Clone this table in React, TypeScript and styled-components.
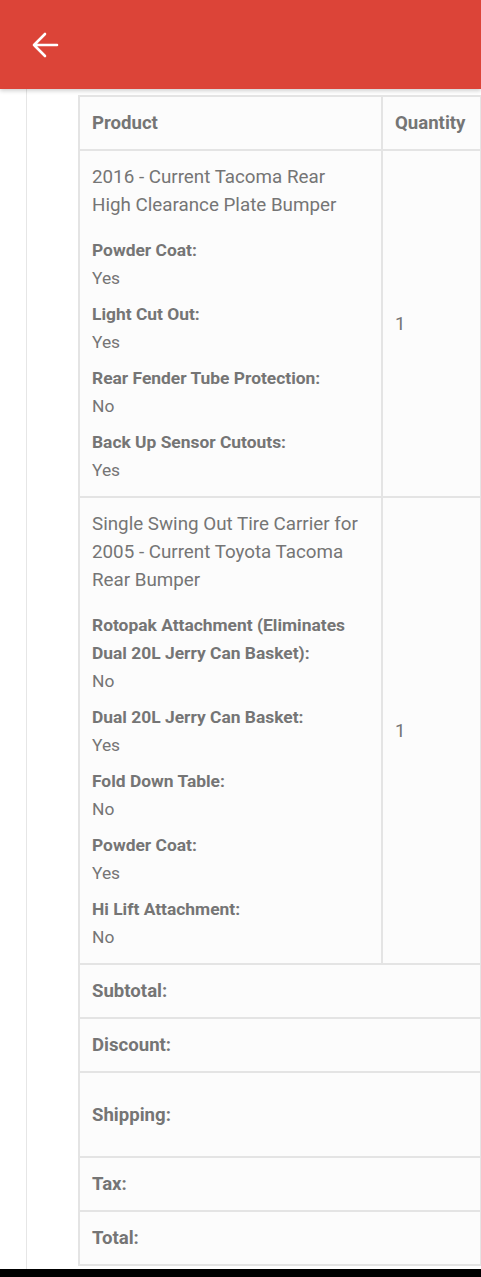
import { FC } from "react";
import styled, { createGlobalStyle } from "styled-components";

const GlobalStyle = createGlobalStyle`
  html, body {
    margin: 0;
    padding: 0;
    background: #ffffff;
    font-family: Roboto, "Noto Sans", Arial, sans-serif;
  }
`;

const Page = styled.div`
  width: 481px;
  min-height: 1277px;
  display: flex;
  flex-direction: column;
  background: #ffffff;
`;

const AppBar = styled.header`
  height: 89px;
  background: #dc4438;
  display: flex;
  align-items: center;
  padding-left: 30px;
  box-shadow: 0 2px 4px rgba(0, 0, 0, 0.18);
  position: relative;
  z-index: 1;
`;

const BackButton = styled.button`
  width: 30px;
  height: 30px;
  border: none;
  background: transparent;
  padding: 0;
  display: flex;
  align-items: center;
  justify-content: center;
  cursor: pointer;
`;

const Content = styled.main`
  flex: 1;
  padding-left: 26px;
  display: flex;
`;

const Panel = styled.div`
  flex: 1;
  border-left: 1px solid #e6e6e6;
  padding: 6px 1px 3px 51px;
`;

const OrderTable = styled.table`
  width: 402px;
  border-collapse: collapse;
  border: 2px solid #e4e4e4;
  background: #fcfcfc;
  color: #757575;
  table-layout: fixed;
`;

const Cell = styled.td<{ $bold?: boolean; $height?: number }>`
  border: 2px solid #e4e4e4;
  padding: 12px 16px 12px 12px;
  font-size: 18.6px;
  font-weight: ${(p) => (p.$bold ? 700 : 400)};
  line-height: 28px;
  vertical-align: middle;
  text-align: left;
  white-space: ${(p) => (p.$bold ? "nowrap" : "normal")};
  height: ${(p) => (p.$height ? `${p.$height}px` : "auto")};
  box-sizing: border-box;
`;

const ProductName = styled.div`
  font-size: 18.8px;
  line-height: 28px;
`;

const Options = styled.dl`
  margin: 17px 0 0;
  display: flex;
  flex-direction: column;
  gap: 8px;
`;

const Option = styled.div`
  font-size: 17.4px;
  line-height: 28px;
`;

const OptionLabel = styled.dt`
  font-weight: 700;
`;

const OptionValue = styled.dd`
  margin: 0;
`;

const NavBar = styled.div`
  height: 9px;
  background: #000000;
`;

const BackArrow = () => (
  <svg width="30" height="30" viewBox="0 0 30 30" fill="none">
    <path
      d="M27 15H4M15 4L4 15l11 11"
      stroke="#ffffff"
      strokeWidth="2.6"
      strokeLinecap="round"
      strokeLinejoin="round"
    />
  </svg>
);

interface LineItem {
  name: string;
  qty: number;
  options: [string, string][];
}

const items: LineItem[] = [
  {
    name: "2016 - Current Tacoma Rear High Clearance Plate Bumper",
    qty: 1,
    options: [
      ["Powder Coat:", "Yes"],
      ["Light Cut Out:", "Yes"],
      ["Rear Fender Tube Protection:", "No"],
      ["Back Up Sensor Cutouts:", "Yes"],
    ],
  },
  {
    name: "Single Swing Out Tire Carrier for 2005 - Current Toyota Tacoma Rear Bumper",
    qty: 1,
    options: [
      ["Rotopak Attachment (Eliminates Dual 20L Jerry Can Basket):", "No"],
      ["Dual 20L Jerry Can Basket:", "Yes"],
      ["Fold Down Table:", "No"],
      ["Powder Coat:", "Yes"],
      ["Hi Lift Attachment:", "No"],
    ],
  },
];

const totals: { label: string; height: number }[] = [
  { label: "Subtotal:", height: 54 },
  { label: "Discount:", height: 54 },
  { label: "Shipping:", height: 85 },
  { label: "Tax:", height: 54 },
  { label: "Total:", height: 54 },
];

const ItemRow: FC<{ item: LineItem }> = ({ item }) => (
  <tr>
    <Cell>
      <ProductName>{item.name}</ProductName>
      <Options>
        {item.options.map(([label, value]) => (
          <Option key={label}>
            <OptionLabel>{label}</OptionLabel>
            <OptionValue>{value}</OptionValue>
          </Option>
        ))}
      </Options>
    </Cell>
    <Cell>{item.qty}</Cell>
  </tr>
);

function App() {
  return (
    <Page>
      <GlobalStyle />
      <AppBar>
        <BackButton aria-label="Back">
          <BackArrow />
        </BackButton>
      </AppBar>
      <Content>
        <Panel>
          <OrderTable>
            <colgroup>
              <col style={{ width: 303 }} />
              <col style={{ width: 99 }} />
            </colgroup>
            <thead>
              <tr>
                <Cell as="th" $bold>
                  Product
                </Cell>
                <Cell as="th" $bold>
                  Quantity
                </Cell>
              </tr>
            </thead>
            <tbody>
              {items.map((item) => (
                <ItemRow key={item.name} item={item} />
              ))}
            </tbody>
            <tfoot>
              {totals.map((t) => (
                <tr key={t.label}>
                  <Cell as="th" colSpan={2} $bold $height={t.height}>
                    {t.label}
                  </Cell>
                </tr>
              ))}
            </tfoot>
          </OrderTable>
        </Panel>
      </Content>
      <NavBar />
    </Page>
  );
}

export default App;
